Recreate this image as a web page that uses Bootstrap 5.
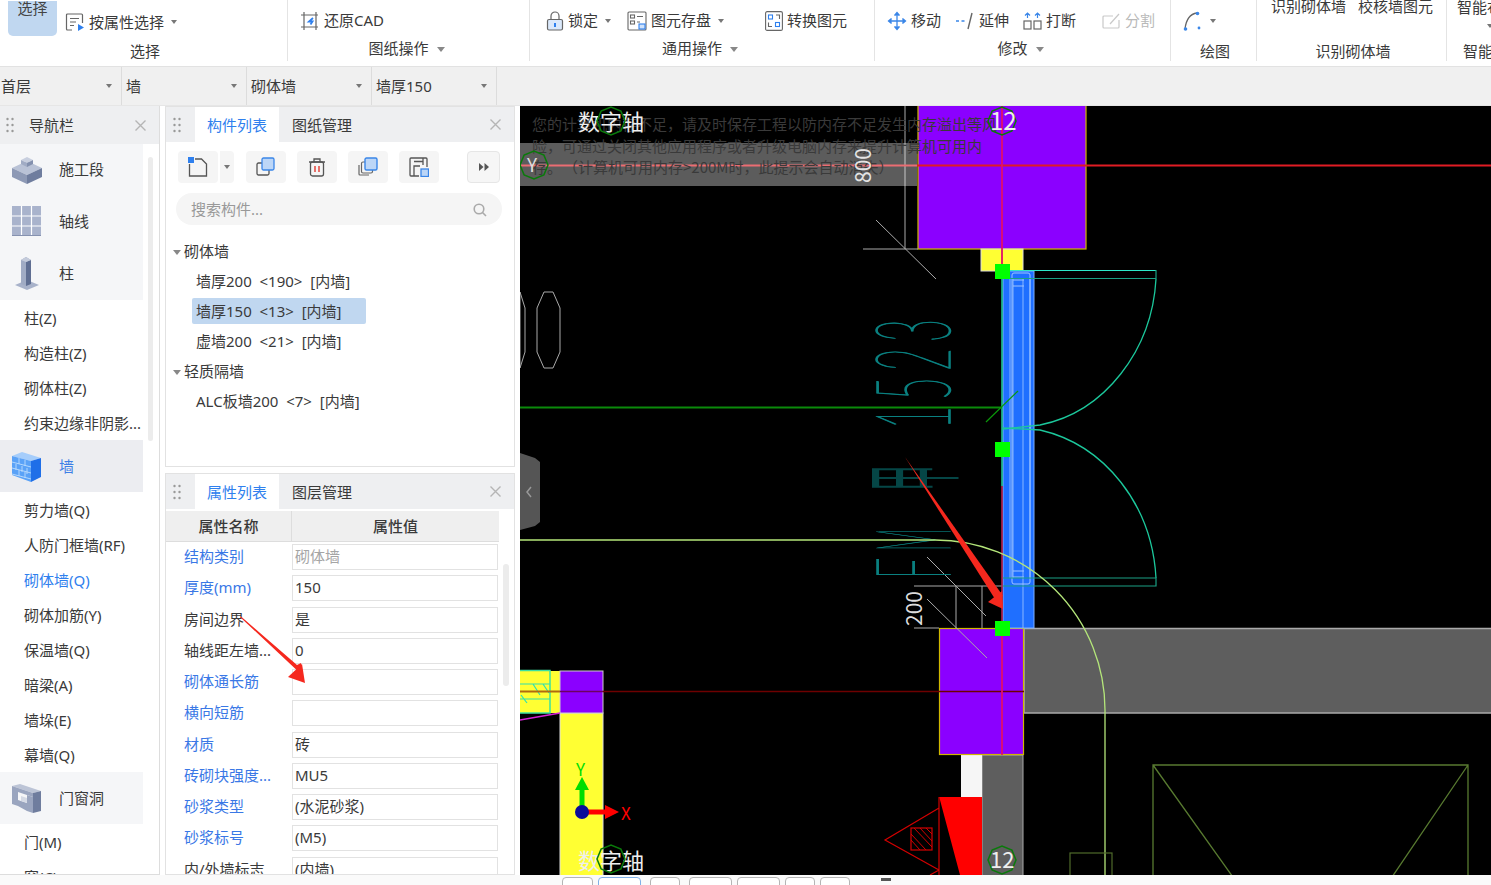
<!DOCTYPE html>
<html lang="zh-CN">
<head>
<meta charset="UTF-8">
<title>砌体墙</title>
<link href="https://cdn.jsdelivr.net/npm/bootstrap@5.3.3/dist/css/bootstrap.min.css" rel="stylesheet">
<style>
html, body { height: 885px; overflow: hidden; background: #fff; }
body { font-family: "Noto Sans", "Noto Sans CJK SC", sans-serif; font-size: 15px; color: #3a3a3a; }
/* ribbon */
.ribbon { height: 67px; overflow: hidden; border-bottom: 1px solid #e2e2e2; }
.rb-group { height: 61px; border-right: 1px solid #e4e4e4; flex: none; }
.rb-top { height: 40px; padding-top: 1px; }
.rb-label { height: 21px; line-height: 22px; padding-left: 3px; }
.rb-up { margin-top: -3px; padding: 0 4px 0 0; }
.rb-w1 { width: 288px; } .rb-w2 { width: 242px; } .rb-w3 { width: 345px; } .rb-w4 { width: 296px; } .rb-w5 { width: 86px; } .rb-w6 { width: 190px; } .rb-w7 { width: 60px; border-right: 0; }
.rb-pick { width: 49px; height: 35px; margin: 0 8px; background: #c0d7f0; border-radius: 0 0 5px 5px; line-height: 14px; text-align: center; color: #444; }
.rb-item { display: flex; align-items: center; gap: 4px; white-space: nowrap; }
.rb-drop { margin-top: 10px; }
.rb-far { margin-left: 41px; }
.rb-mid { margin-left: 14px; }
.rb-off { margin-left: 26px; color: #b9b9b9; }
.rb-clip { margin-top: -28px; white-space: nowrap; }
.rb-pair { gap: 12px; padding-left: 14px; }
.rb-edge { padding-left: 10px; }
.rb-edge span:first-child { margin-top: -4px; white-space: nowrap; line-height: 20px; }
.rb-edge .caret-s { margin: 7px 0 0 30px; }
.caret-s { display: inline-block; width: 0; height: 0; border: 3.5px solid transparent; border-top: 4px solid #777; border-bottom: 0; margin-left: 3px; }
.caret-m { display: inline-block; width: 0; height: 0; border: 4.5px solid transparent; border-top: 5px solid #888; border-bottom: 0; margin-left: 8px; vertical-align: 2px; }
/* selector bar */
.sel-bar { height: 39px; background: #f0f0f0; border-bottom: 1px solid #e6e6e6; }
.sel-cell { width: 125px; height: 38px; border-right: 1px solid #dcdcdc; padding: 0 9px 0 1px; }
.sel-first { width: 122px; }
.sel-cell + .sel-cell { padding-left: 4px; }
/* panels */
.work { height: 769px; }
.nav-pane { width: 160px; border-right: 1px solid #ddd; border-bottom: 1px solid #ddd; overflow: hidden; position: relative; flex: none; }
.pane-head { height: 38px; background: #eeeff1; }
.pane-title { margin-left: 15px; }
.grip { flex: none; }
.grip-nav { margin-left: 6px; }
.grip-mid { margin: 0 10px 0 7px; }
.x-btn { flex: none; margin-right: 13px; }
.nav-big { width: 143px; height: 52px; background: #f5f6f8; padding: 0 0 2px 11px; gap: 17px; }
.nav-big.cur, .nav-big.low { padding: 1px 0 0 11px; }
.nav-big.cur { background: #ecedf1; color: #3d7fe6; }
.nav-sub { height: 35px; line-height: 37px; padding-left: 24px; white-space: nowrap; }
.nav-sub.cur { color: #2f80ee; }
.nav-scroll { position: absolute; left: 148px; top: 51px; width: 5px; height: 284px; background: #ececec; border-radius: 3px; }
.mid-col { width: 350px; margin: 0 5px; flex: none; gap: 6px; }
.mid-pane { border: 1px solid #e2e2e2; overflow: hidden; position: relative; }
.pane-top { height: 361px; flex: none; }
.pane-low { flex: 1; min-height: 0; }
.tabs-head { height: 35px; background: #eeeff1; }
.tab-on { width: 84px; height: 35px; line-height: 37px; text-align: center; background: #fff; color: #2f80ee; }
.tab-off { width: 86px; height: 35px; line-height: 37px; text-align: center; }
.tool-row { height: 32px; margin: 9px 0 0 12px; }
.tool-b { width: 40px; height: 32px; background: #f5f5f5; border-radius: 4px; margin-right: 11px; }
.tool-split { width: 15px; margin-left: -10px; border-left: 1px solid #fff; border-radius: 0 4px 4px 0; margin-right: 12px; }
.tool-more { width: 33px; border: 1px solid #e6e6e6; margin: 0 14px 0 auto; background: #f6f6f6; }
.search-pill { height: 32px; margin: 10px 12px 0 10px; background: #f5f5f5; border-radius: 16px; padding: 1px 15px 0; color: #999; }
.tree { margin-top: 11px; }
.tree-row { height: 30px; line-height: 30px; white-space: nowrap; }
.tree-top { padding-left: 7px; }
.tree-top i { display: inline-block; width: 0; height: 0; border: 4px solid transparent; border-top: 5px solid #888; border-bottom: 0; margin-right: 3px; vertical-align: 2px; }
.tree-leaf { padding-left: 30px; }
.tree-sel { margin: 2px 0 2px 26px; height: 26px; line-height: 26px; width: 174px; padding-left: 4px; background: #c0d7f0; border-radius: 2px; white-space: nowrap; }
.attr-head { width: 333px; height: 31px; margin-top: 2px; background: #efefef; border-bottom: 1px solid #ddd; font-weight: 500; }
.attr-h1 { width: 126px; text-align: center; border-right: 1px solid #ddd; line-height: 30px; }
.attr-h2 { width: 207px; text-align: center; line-height: 30px; }
.attr-row { height: 31.25px; width: 333px; }
.attr-name { width: 126px; padding-left: 18px; white-space: nowrap; flex: none; line-height: 24px; }
.attr-name.lnk { color: #3a78e6; }
.attr-val.form-control { width: 206px; height: 26px; border: 1px solid #e2e2e2; border-radius: 0; padding: 0 2px; font-size: 15px; line-height: 22px; color: #3a3a3a; background: #fff; }
.attr-val.dim { color: #a5a5a5; }
.attr-list { margin-top: 2px; }
.attr-scroll { position: absolute; left: 337px; top: 90px; width: 6px; height: 122px; background: #ececec; border-radius: 3px; }
.note-arrow { position: absolute; left: 60px; top: 130px; }
/* canvas */
.cad { flex: 1; min-width: 0; background: #000; overflow: hidden; }
.cad svg { display: block; }
.cad text { font-family: "Noto Sans CJK SC", sans-serif; }
.cad .hand { font-family: "Lato", "Inter", "Noto Sans CJK SC", sans-serif; font-weight: 100; stroke: #0a8080; stroke-width: 1.2px; vector-effect: non-scaling-stroke; }
.foot-bar { height: 10px; background: #fafafa; overflow: hidden; padding: 2px 0 0 562px; gap: 5px; }
.foot-b { height: 12px; border: 1px solid #b5b5b5; border-radius: 4px 4px 0 0; background: #fff; flex: none; }
.foot-b.on { border-color: #7fb0e8; }
.fw-s { width: 31px; } .fw-m { width: 43px; } .fw-t { width: 30px; }
.foot-mark { width: 10px; height: 3px; background: #555; margin: 1px 0 0 26px; flex: none; }
</style>
</head>
<body>

<div class="ribbon d-flex">
  <div class="rb-group rb-w1 d-flex flex-column">
    <div class="rb-top d-flex align-items-start">
      <div class="rb-pick">选择</div>
      <div class="rb-item rb-drop">
        <svg width="20" height="20" viewBox="0 0 20 20" fill="none" stroke="#666" stroke-width="1.2"><path d="M7 18H2.500a1 1 0 0 1-1-1V3a1 1 0 0 1 1-1h14a1 1 0 0 1 1 1v8"/><path d="M5 6.500h9M5 10h6M5 13.500h4"/><path d="M13 12l6 3.500-6 3.500z" fill="#2f80ee" stroke="none"/></svg>
        <span>按属性选择</span><span class="caret-s"></span>
      </div>
    </div>
    <div class="rb-label text-center">选择</div>
  </div>
  <div class="rb-group rb-w2 d-flex flex-column">
    <div class="rb-top d-flex align-items-center ps-2">
      <div class="rb-item ms-1">
        <svg width="20" height="20" viewBox="0 0 20 20" fill="none" stroke="#666" stroke-width="1.2"><path d="M1 4h17M1 16h17M4 1v18M16 1v18"/><path d="M13 7l-4 3.500h3.500l-2 3" stroke="#2f80ee" stroke-width="1.800"/></svg>
        <span>还原CAD</span>
      </div>
    </div>
    <div class="rb-label text-center rb-up">图纸操作<span class="caret-m"></span></div>
  </div>
  <div class="rb-group rb-w3 d-flex flex-column">
    <div class="rb-top d-flex align-items-center">
      <div class="rb-item ms-3">
        <svg width="18" height="20" viewBox="0 0 18 20" fill="none" stroke="#666" stroke-width="1.200"><path d="M5 9V5a4 4 0 0 1 8 0v4"/><rect x="1.500" y="8.500" width="15" height="10.500" rx="1.500" fill="#dbe9fb"/><rect x="8" y="12" width="2" height="4" fill="#2f80ee" stroke="none"/></svg>
        <span>锁定</span><span class="caret-s"></span>
      </div>
      <div class="rb-item ms-3">
        <svg width="20" height="20" viewBox="0 0 20 20" fill="none" stroke="#666" stroke-width="1.100"><rect x="1" y="1" width="18" height="18" rx="1"/><rect x="3.500" y="4" width="4" height="3"/><path d="M10 5.500h6M10 11h3"/><rect x="3.500" y="10" width="4" height="3"/><rect x="12" y="13" width="6" height="5" fill="#cfe2fb" stroke="#2f80ee"/></svg>
        <span>图元存盘</span><span class="caret-s"></span>
      </div>
      <div class="rb-item rb-far">
        <svg width="18" height="20" viewBox="0 0 18 20" fill="none" stroke="#666" stroke-width="1.100"><rect x=".6" y=".6" width="16.800" height="18.800" rx="1.500"/><rect x="3.500" y="4" width="4" height="4" stroke="#2f80ee"/><rect x="10.500" y="11.500" width="4" height="4" stroke="#2f80ee"/><path d="M11 4h3.500v4M7 15.500H3.500v-4"/></svg>
        <span>转换图元</span>
      </div>
    </div>
    <div class="rb-label text-center rb-up">通用操作<span class="caret-m"></span></div>
  </div>
  <div class="rb-group rb-w4 d-flex flex-column">
    <div class="rb-top d-flex align-items-center">
      <div class="rb-item ms-2 ps-1">
        <svg width="20" height="20" viewBox="0 0 20 20" fill="none" stroke="#3a86e8" stroke-width="1.300"><path d="M10 2v16M2 10h16"/><path d="M7.500 4.500L10 1.500l2.500 3M7.500 15.500l2.500 3 2.500-3M4.500 7.500L1.500 10l3 2.500M15.500 7.500l3 2.500-3 2.500" fill="#3a86e8"/></svg>
        <span>移动</span>
      </div>
      <div class="rb-item rb-mid">
        <svg width="20" height="20" viewBox="0 0 20 20" fill="none" stroke-width="1.400"><path d="M1 10h3M6.500 10h3" stroke="#3a86e8"/><path d="M17 2l-4 16" stroke="#666"/></svg>
        <span>延伸</span>
      </div>
      <div class="rb-item rb-mid">
        <svg width="19" height="20" viewBox="0 0 19 20" fill="none" stroke="#666" stroke-width="1.200"><rect x="1" y="10" width="7" height="8"/><rect x="11" y="10" width="7" height="8"/><path d="M4.500 2v5M14.500 2v5M2 4.500l2.500-2.500L7 4.500M12 4.500l2.500-2.500L17 4.500" stroke="#3a86e8"/></svg>
        <span>打断</span>
      </div>
      <div class="rb-item rb-off">
        <svg width="19" height="20" viewBox="0 0 19 20" fill="none" stroke="#c9c9c9" stroke-width="1.200"><path d="M11 5H2a1 1 0 0 0-1 1v10a1 1 0 0 0 1 1h14a1 1 0 0 0 1-1V9"/><path d="M8 13l9-10"/></svg>
        <span>分割</span>
      </div>
    </div>
    <div class="rb-label text-center rb-up">修改<span class="caret-m"></span></div>
  </div>
  <div class="rb-group rb-w5 d-flex flex-column">
    <div class="rb-top d-flex align-items-center ps-2 ms-1">
      <div class="rb-item">
        <svg width="20" height="20" viewBox="0 0 20 20" fill="none" stroke="#666" stroke-width="1.300"><path d="M2 18C3 9 7 3 14 2"/><circle cx="2.500" cy="18" r="1.800" fill="#3a86e8" stroke="none"/><circle cx="14.500" cy="2.500" r="1.800" fill="#3a86e8" stroke="none"/><circle cx="16" cy="17" r="1.400" fill="#3a86e8" stroke="none"/></svg>
        <span class="caret-s"></span>
      </div>
    </div>
    <div class="rb-label text-center">绘图</div>
  </div>
  <div class="rb-group rb-w6 d-flex flex-column">
    <div class="rb-top d-flex align-items-center rb-pair">
      <span class="rb-clip">识别砌体墙</span><span class="rb-clip">校核墙图元</span>
    </div>
    <div class="rb-label text-center">识别砌体墙</div>
  </div>
  <div class="rb-group rb-w7 d-flex flex-column">
    <div class="rb-top d-flex flex-column rb-edge"><span>智能布置</span><span class="caret-s"></span></div>
    <div class="rb-label ps-3">智能</div>
  </div>
</div>

<div class="sel-bar d-flex">
  <div class="sel-cell sel-first d-flex align-items-center justify-content-between"><span>首层</span><span class="caret-s"></span></div>
  <div class="sel-cell d-flex align-items-center justify-content-between"><span>墙</span><span class="caret-s"></span></div>
  <div class="sel-cell d-flex align-items-center justify-content-between"><span>砌体墙</span><span class="caret-s"></span></div>
  <div class="sel-cell d-flex align-items-center justify-content-between"><span>墙厚150</span><span class="caret-s"></span></div>
</div>

<div class="work d-flex">
  <div class="nav-pane">
    <div class="pane-head d-flex align-items-center">
      <svg class="grip grip-nav" width="8" height="16" viewBox="0 0 8 16" fill="#999"><circle cx="1.500" cy="2" r="1.200"/><circle cx="6.500" cy="2" r="1.200"/><circle cx="1.500" cy="8" r="1.200"/><circle cx="6.500" cy="8" r="1.200"/><circle cx="1.500" cy="14" r="1.200"/><circle cx="6.500" cy="14" r="1.200"/></svg>
      <span class="pane-title flex-grow-1">导航栏</span>
      <svg class="x-btn" width="11" height="11" viewBox="0 0 11 11" stroke="#b5b5b5" stroke-width="1.400"><path d="M.5.5l10 10M10.500.5l-10 10"/></svg>
    </div>
    <div class="nav-big d-flex align-items-center">
      <svg width="31" height="32" viewBox="0 0 31 32"><path d="M1 15l15-7 15 7-15 7z" fill="#b9c2d6"/><path d="M1 15l15 7v9L1 24z" fill="#8d99b5"/><path d="M31 15l-15 7v9l15-7z" fill="#6f7d9e"/><path d="M10 7l6-3 6 3-6 3z" fill="#c8cfdf"/><path d="M10 7l6 3v4l-6-3z" fill="#a0abc4"/><path d="M22 7l-6 3v4l6-3z" fill="#8390ae"/></svg>
      <span>施工段</span>
    </div>
    <div class="nav-big d-flex align-items-center">
      <svg width="31" height="32" viewBox="0 0 31 32"><rect x="1" y="1" width="29" height="30" fill="#a9b3cc"/><path d="M10.500 1v30M20.500 1v30M1 11h29M1 21h29" stroke="#fff" stroke-width="1.200"/><path d="M1 30.500h29" stroke="#8692b0"/></svg>
      <span>轴线</span>
    </div>
    <div class="nav-big d-flex align-items-center">
      <svg width="31" height="34" viewBox="0 0 31 34"><path d="M4 29l12-5 12 5-12 5z" fill="#a8b2ca"/><path d="M10 4l5-3 5 3v24l-5 2-5-2z" fill="#a0abc4"/><path d="M15 6l5-2v24l-5 2z" fill="#5f6e92"/><path d="M10 4l5-3 5 3-5 2z" fill="#c4cbdb"/></svg>
      <span>柱</span>
    </div>
    <div class="nav-sub">柱(Z)</div>
    <div class="nav-sub">构造柱(Z)</div>
    <div class="nav-sub">砌体柱(Z)</div>
    <div class="nav-sub">约束边缘非阴影...</div>
    <div class="nav-big cur d-flex align-items-center">
      <svg width="31" height="32" viewBox="0 0 31 32"><path d="M1 5l10-4 19 6-10 3z" fill="#a5cdfb"/><path d="M1 5l19 5v21L1 24z" fill="#5aa2f7"/><path d="M20 10l10-3v19l-10 5z" fill="#1f6fe8"/><path d="M1 11l19 5M1 17l19 5M1 23l19 5M8 7v6M14 9v6M5 13v6M11 15v6M16 17v6M8 19v6M14 21v6" stroke="#bcdcfd" stroke-width=".9" fill="none"/></svg>
      <span>墙</span>
    </div>
    <div class="nav-sub">剪力墙(Q)</div>
    <div class="nav-sub">人防门框墙(RF)</div>
    <div class="nav-sub cur">砌体墙(Q)</div>
    <div class="nav-sub">砌体加筋(Y)</div>
    <div class="nav-sub">保温墙(Q)</div>
    <div class="nav-sub">暗梁(A)</div>
    <div class="nav-sub">墙垛(E)</div>
    <div class="nav-sub">幕墙(Q)</div>
    <div class="nav-big low d-flex align-items-center">
      <svg width="31" height="32" viewBox="0 0 31 32"><path d="M1 3l8-2 21 7-8 2z" fill="#bcc4d6"/><path d="M1 3l6 2v18l-6-2zM7 5l15 5v4L7 9z" fill="#9aa5bf"/><path d="M16 12l6 2v16l-6-2zM7 17l9 3v8l-9-5z" fill="#9aa5bf"/><path d="M22 10l8-2v20l-8 2z" fill="#6f7d9e"/><path d="M10 13l6 2v5l-6-2z" fill="#d5dae5"/></svg>
      <span>门窗洞</span>
    </div>
    <div class="nav-sub">门(M)</div>
    <div class="nav-sub">窗(C)</div>
    <div class="nav-scroll"></div>
  </div>

  <div class="mid-col d-flex flex-column">
    <div class="mid-pane pane-top">
      <div class="tabs-head d-flex align-items-center">
        <svg class="grip grip-mid" width="8" height="16" viewBox="0 0 8 16" fill="#999"><circle cx="1.500" cy="2" r="1.200"/><circle cx="6.500" cy="2" r="1.200"/><circle cx="1.500" cy="8" r="1.200"/><circle cx="6.500" cy="8" r="1.200"/><circle cx="1.500" cy="14" r="1.200"/><circle cx="6.500" cy="14" r="1.200"/></svg>
        <div class="ms-1 tab-on">构件列表</div>
        <div class="tab-off">图纸管理</div>
        <svg class="x-btn ms-auto" width="11" height="11" viewBox="0 0 11 11" stroke="#b5b5b5" stroke-width="1.400"><path d="M.5.5l10 10M10.500.5l-10 10"/></svg>
      </div>
      <div class="tool-row d-flex">
        <div class="tool-b d-flex align-items-center justify-content-center">
          <svg width="20" height="20" viewBox="0 0 20 20" fill="none" stroke="#555" stroke-width="1.300"><path d="M1.500 7v12h17V7l-5-5H7"/><rect x="0" y="0" width="6" height="6" fill="#2f80ee" stroke="none"/></svg>
        </div>
        <div class="tool-b tool-split d-flex align-items-center justify-content-center"><span class="caret-s m-0"></span></div>
        <div class="tool-b d-flex align-items-center justify-content-center">
          <svg width="20" height="20" viewBox="0 0 20 20" fill="none" stroke="#555" stroke-width="1.300"><rect x="1" y="6" width="12" height="12" rx="1.500"/><rect x="6" y="1" width="12" height="12" rx="1.500" fill="#bcd6f7" stroke="#3a86e8"/></svg>
        </div>
        <div class="tool-b d-flex align-items-center justify-content-center">
          <svg width="18" height="20" viewBox="0 0 18 20" fill="none" stroke="#555" stroke-width="1.300"><path d="M1 5h16M6 5V2h6v3"/><rect x="2.500" y="5" width="13" height="14" rx="2"/><path d="M7 9v6M11 9v6" stroke="#e2453c" stroke-width="1.500"/></svg>
        </div>
        <div class="tool-b d-flex align-items-center justify-content-center">
          <svg width="20" height="20" viewBox="0 0 20 20" fill="none" stroke="#666" stroke-width="1.200"><path d="M1 8v9a1 1 0 0 0 1 1h9"/><rect x="3.500" y="5" width="11" height="11" rx="1.500"/><rect x="7" y="1" width="12" height="12" rx="1.500" fill="#bcd6f7" stroke="#3a86e8" stroke-width="1.400"/></svg>
        </div>
        <div class="tool-b d-flex align-items-center justify-content-center">
          <svg width="20" height="20" viewBox="0 0 20 20" fill="none" stroke="#555" stroke-width="1.300"><path d="M18 10V2a1 1 0 0 0-1-1H2a1 1 0 0 0-1 1v16a1 1 0 0 0 1 1h8"/><path d="M5 19V9h6M5 4.500h9M14 1v7"/><rect x="12" y="12" width="7.500" height="7.500" fill="#bcd6f7" stroke="#3a86e8"/></svg>
        </div>
        <div class="tool-b tool-more d-flex align-items-center justify-content-center">
          <svg width="10" height="8" viewBox="0 0 10 8" fill="#555"><path d="M0 0l4.500 4L0 8zM5.500 0L10 4 5.500 8z"/></svg>
        </div>
      </div>
      <div class="search-pill d-flex align-items-center justify-content-between">
        <span>搜索构件...</span>
        <svg width="14" height="14" viewBox="0 0 14 14" fill="none" stroke="#aaa" stroke-width="1.600"><circle cx="6" cy="6" r="4.800"/><path d="M9.500 9.500l3.500 3.500"/></svg>
      </div>
      <div class="tree">
        <div class="tree-row tree-top"><i></i>砌体墙</div>
        <div class="tree-row tree-leaf">墙厚200&nbsp; &lt;190&gt;&nbsp; [内墙]</div>
        <div class="tree-sel">墙厚150&nbsp; &lt;13&gt;&nbsp; [内墙]</div>
        <div class="tree-row tree-leaf">虚墙200&nbsp; &lt;21&gt;&nbsp; [内墙]</div>
        <div class="tree-row tree-top"><i></i>轻质隔墙</div>
        <div class="tree-row tree-leaf">ALC板墙200&nbsp; &lt;7&gt;&nbsp; [内墙]</div>
      </div>
    </div>

    <div class="mid-pane pane-low">
      <div class="tabs-head d-flex align-items-center">
        <svg class="grip grip-mid" width="8" height="16" viewBox="0 0 8 16" fill="#999"><circle cx="1.500" cy="2" r="1.200"/><circle cx="6.500" cy="2" r="1.200"/><circle cx="1.500" cy="8" r="1.200"/><circle cx="6.500" cy="8" r="1.200"/><circle cx="1.500" cy="14" r="1.200"/><circle cx="6.500" cy="14" r="1.200"/></svg>
        <div class="ms-1 tab-on">属性列表</div>
        <div class="tab-off">图层管理</div>
        <svg class="x-btn ms-auto" width="11" height="11" viewBox="0 0 11 11" stroke="#b5b5b5" stroke-width="1.400"><path d="M.5.5l10 10M10.500.5l-10 10"/></svg>
      </div>
      <div class="attr-head d-flex">
        <div class="attr-h1">属性名称</div>
        <div class="attr-h2">属性值</div>
      </div>
      <div class="attr-list">
        <div class="attr-row d-flex"><div class="attr-name lnk">结构类别</div><div class="attr-val dim form-control">砌体墙</div></div>
        <div class="attr-row d-flex"><div class="attr-name lnk">厚度(mm)</div><div class="attr-val form-control">150</div></div>
        <div class="attr-row d-flex"><div class="attr-name">房间边界</div><div class="attr-val form-control">是</div></div>
        <div class="attr-row d-flex"><div class="attr-name">轴线距左墙...</div><div class="attr-val form-control">0</div></div>
        <div class="attr-row d-flex"><div class="attr-name lnk">砌体通长筋</div><div class="attr-val form-control"></div></div>
        <div class="attr-row d-flex"><div class="attr-name lnk">横向短筋</div><div class="attr-val form-control"></div></div>
        <div class="attr-row d-flex"><div class="attr-name lnk">材质</div><div class="attr-val form-control">砖</div></div>
        <div class="attr-row d-flex"><div class="attr-name lnk">砖砌块强度...</div><div class="attr-val form-control">MU5</div></div>
        <div class="attr-row d-flex"><div class="attr-name lnk">砂浆类型</div><div class="attr-val form-control">(水泥砂浆)</div></div>
        <div class="attr-row d-flex"><div class="attr-name lnk">砂浆标号</div><div class="attr-val form-control">(M5)</div></div>
        <div class="attr-row d-flex"><div class="attr-name">内/外墙标志</div><div class="attr-val form-control">(内墙)</div></div>
      </div>
      <div class="attr-scroll"></div>
      <svg class="note-arrow" width="90" height="80" viewBox="0 0 90 80"><path d="M14 13L77 72 75 59 71 61 15 12.500z" fill="#f5281e"/><path d="M79 79L62 73 76 60z" fill="#f5281e"/></svg>
    </div>
  </div>

  <div class="cad">
    <svg width="971" height="769" viewBox="520 106 971 769" fill="none">
      <defs><polygon id="axisRing" points="14,0 9.900,9.900 0,14 -9.900,9.900 -14,0 -9.900,-9.900 0,-14 9.900,-9.900" stroke="#0a7a0a" stroke-width="1.500"/></defs>
      <!-- walls -->
      <rect x="1024" y="628.500" width="470" height="84.500" fill="#5e5e5e" stroke="#aaa" stroke-width="1.500"/>
      <rect x="982" y="755" width="41" height="125" fill="#5e5e5e" stroke="#aaa"/>
      <rect x="961" y="755" width="21" height="42" fill="#f6f6f6"/>
      <rect x="918" y="104" width="168" height="145" fill="#8b00ff" stroke="#d0b800" stroke-width="1.200"/>
      <rect x="981" y="249" width="42" height="22" fill="#ffff33" stroke="#ddd"/>
      <rect x="939.500" y="628.500" width="84" height="126" fill="#8b00ff" stroke="#d0b800" stroke-width="1.200"/>
      <!-- left column -->
      <rect x="560" y="713" width="43" height="170" fill="#ffff33" stroke="#ddd"/>
      <rect x="550" y="671" width="10" height="42" fill="#ffff33"/>
      <rect x="560" y="671" width="43" height="42" fill="#8b00ff" stroke="#ccc"/>
      <rect x="518" y="670.500" width="32" height="42.500" fill="#ffff33" stroke="#3de0a0" stroke-width="1.500"/>
      <path d="M520 684h30M520 699h30M521 695l6 8M533 684l7 11M543 684l6 9" stroke="#2fe0b0" stroke-width="1.200"/>
      <path d="M603 691.500H1024" stroke="#6e0000" stroke-width="1.500"/>
      <path d="M520 691.500H560" stroke="#b06a10" stroke-width="2"/>
      <path d="M560 691.500h43" stroke="#6e0060" stroke-width="1.500"/>
      <path d="M520 720l40-7" stroke="#d622d6" stroke-width="1.500"/>
      <!-- dim lines -->
      <g stroke="#aaa" stroke-width="1">
        <path d="M905 106V249M863 249H918M876 220L936 279"/>
        <path d="M914 586H1002M914 628H939M956 586V628M982 586V628M927 557L986 616M927 599L987 658"/>
        <polygon points="544,292 553,292 560,308 560,352 553,368 544,368 537,352 537,308"/>
        <polygon points="520,292 525,308 525,352 520,368"/>
      </g>
      <text x="0" y="0" transform="translate(922 626) rotate(-90)" font-size="21" fill="#ddd">200</text>
      <!-- door mark, rotated along the wall -->
      <g fill="#0a8080">
        <text class="hand" transform="translate(950 579) rotate(-90) scale(.36 1)" font-size="104">F</text>
        <text class="hand" transform="translate(950 551) rotate(-90) scale(.24 1)" font-size="104">M</text>
        <text transform="translate(950 491) rotate(-90) scale(.26 1)" font-size="100" fill-opacity=".55">甲</text>
        <text class="hand" transform="translate(950 429) rotate(-90) scale(.38 1)" font-size="104" letter-spacing="16">1523</text>
      </g>
      <!-- wall in plan -->
      <rect x="1003" y="271" width="31" height="357" fill="#1f6fff" stroke="#7fb0ff"/>
      <path d="M1010 279V578M1013 279V578M1023 279V628M1030 279V578" stroke="#8ab8ff" stroke-width="1"/>
      <rect x="1012" y="273" width="18" height="311" rx="2" stroke="#9fc5ff"/>
      <path d="M1013 286h11M1013 280h11M1013 571h11M1013 577h11" stroke="#9fc5ff"/>
      <!-- door -->
      <path d="M1002 270.500H1156" stroke="#2de8c8" stroke-width="1.200"/>
      <path d="M1003 278.500H1156V270" stroke="#1aa084" stroke-width="1.200"/>
      <path d="M1156 279C1152 350 1105 412 1040 425L1003 429" stroke="#1cc89c" stroke-width="1.300"/>
      <path d="M1003 428L1040 430C1105 445 1152 505 1156 578" stroke="#1cc89c" stroke-width="1.300"/>
      <path d="M1002 578H1156V586H1002" stroke="#1aa084" stroke-width="1.200"/>
      <path d="M1002 271V486" stroke="#1fd09c" stroke-width="1.500"/>
      <path d="M1002 486V628" stroke="#c02050" stroke-width="1.500"/>
      <!-- axes -->
      <path d="M520 165.500H1491" stroke="#e01c24" stroke-width="2"/>
      <path d="M1002 106V271M1002 628V755" stroke="#e0106a" stroke-width="1.800"/>
      <path d="M520 407.500H1002" stroke="#0a8a0a" stroke-width="2"/>
      <path d="M986 422L1018 391" stroke="#0a9a0a" stroke-width="1.200"/>
      <path d="M520 540H935A170 170 0 0 1 1105 710V875" stroke="#b4e67a" stroke-width="1.300"/>
      <!-- red column -->
      <polygon points="939,797 982,797 982,875 960,875 940,800" fill="#ff0000"/>
      <path d="M939 797V875M939 808L885 840L939 870M939 870L930 875" stroke="#d40000" stroke-width="1.200"/>
      <rect x="911" y="828" width="21" height="22" stroke="#d40000" stroke-width="1.200"/>
      <path d="M911 834l15 16M911 840l9 10M914 828l18 19M920 828l12 13M926 828l6 6" stroke="#d40000"/>
      <!-- lower right outlines -->
      <rect x="1070" y="853" width="42" height="30" stroke="#4f6a2a" stroke-width="1.200"/>
      <path d="M1153 880V765H1468V880M1153 765L1235 880M1468 765L1390 880" stroke="#587a30" stroke-width="1.300"/>
      <!-- grips -->
      <g fill="#00ff00"><rect x="995" y="264" width="15" height="15"/><rect x="995" y="442" width="15" height="15"/><rect x="995" y="621" width="15" height="15"/></g>
      <!-- red annotation arrow -->
      <path d="M905 457L1003 596 999 598 995 599z" fill="#f5281e"/>
      <path d="M1003 609L988 602 1002 591z" fill="#f5281e"/>
      <!-- ucs -->
      <path d="M579.500 790h5v16h-5z" fill="#00dd00"/>
      <polygon points="582,777 575,790 589,790" fill="#00dd00"/>
      <rect x="588" y="809.500" width="17" height="5" fill="#f00"/>
      <polygon points="619,812 605,805 605,819" fill="#f00"/>
      <circle cx="582" cy="812" r="7" fill="#0a0a9a"/>
      <text x="576" y="776" font-size="17" fill="#00e000">Y</text>
      <text x="621" y="820" font-size="17" fill="#f00">X</text>
      <!-- memory warning banner -->
      <rect x="520" y="143" width="397" height="43" fill="#fff" fill-opacity=".36"/>
      <g font-size="15" fill="#3a3a3a">
        <text x="532" y="130">您的计算机内存不足，请及时保存工程以防内存不足发生内存溢出等风</text>
        <text x="532" y="152">险，可通过关闭其他应用程序或者升级电脑内存来提升计算机可用内</text>
        <text x="532" y="173">存。</text>
        <text x="563" y="173">（计算机可用内存&gt;200M时，此提示会自动消失）</text>
      </g>
      <text x="0" y="0" transform="translate(871 183) rotate(-90)" font-size="21" fill="#e4e4e4">800</text>
      <!-- axis labels -->
      <text x="578" y="130" font-size="22" fill="#eee">数字轴</text>
      <use href="#axisRing" x="611" y="121"/>
      <text x="578" y="869" font-size="22" fill="#eee">数字轴</text>
      <use href="#axisRing" x="611" y="859"/>
      <use href="#axisRing" x="534" y="165"/>
      <text x="527" y="172" font-size="19" fill="#ddd">Y</text>
      <use href="#axisRing" x="1002" y="121"/>
      <text x="990" y="130" font-size="24" fill="#eee">12</text>
      <use href="#axisRing" x="1002" y="860"/>
      <text x="990" y="868" font-size="22" fill="#eee">12</text>
      <!-- collapse handle -->
      <polygon points="520,453 535,458 540,462 540,522 535,526 520,530" fill="#555"/>
      <path d="M531 487l-4 5 4 5" stroke="#999" stroke-width="1.500"/>
    </svg>
  </div>
</div>

<div class="foot-bar d-flex">
  <div class="foot-b fw-s"></div>
  <div class="foot-b on fw-m"></div>
  <div class="foot-b fw-t ms-1"></div>
  <div class="foot-b fw-m ms-1"></div>
  <div class="foot-b fw-m"></div>
  <div class="foot-b fw-t"></div>
  <div class="foot-b fw-t"></div>
  <div class="foot-mark"></div>
</div>

<script src="https://cdn.jsdelivr.net/npm/bootstrap@5.3.3/dist/js/bootstrap.bundle.min.js"></script>
</body>
</html>
